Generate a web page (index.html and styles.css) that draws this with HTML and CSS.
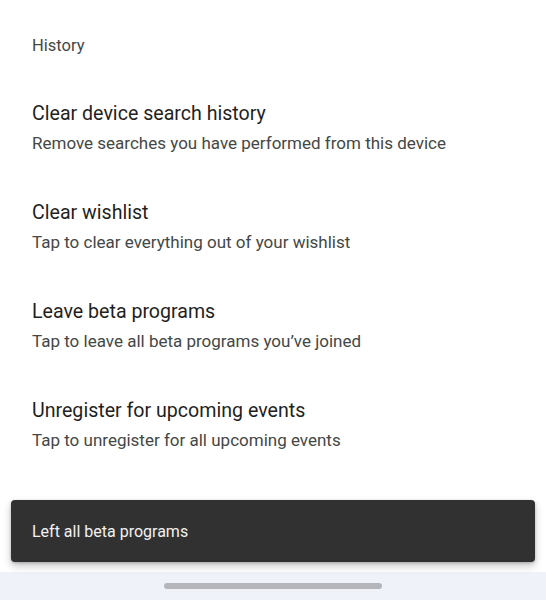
FILE: index.html
```html
<!DOCTYPE html>
<html lang="en">
<head>
<meta charset="utf-8">
<title>History settings</title>
<link rel="stylesheet" href="styles.css">
</head>
<body>
<main class="screen">
  <h2 class="section-header">History</h2>
  <ul class="pref-list">
    <li class="pref">
      <span class="pref-title">Clear device search history</span>
      <span class="pref-summary">Remove searches you have performed from this device</span>
    </li>
    <li class="pref">
      <span class="pref-title">Clear wishlist</span>
      <span class="pref-summary">Tap to clear everything out of your wishlist</span>
    </li>
    <li class="pref">
      <span class="pref-title">Leave beta programs</span>
      <span class="pref-summary">Tap to leave all beta programs you’ve joined</span>
    </li>
    <li class="pref">
      <span class="pref-title">Unregister for upcoming events</span>
      <span class="pref-summary">Tap to unregister for all upcoming events</span>
    </li>
  </ul>
</main>
<div class="snackbar" role="status">Left all beta programs</div>
<div class="nav-bar"><span class="nav-handle"></span></div>
</body>
</html>
```

FILE: styles.css
```css
* { box-sizing: border-box; }
html, body {
  margin: 0;
  padding: 0;
  background: #ffffff;
  font-family: Roboto, "Noto Sans", "Liberation Sans", sans-serif;
}
body {
  width: 546px;
  height: 600px;
  position: relative;
  overflow: hidden;
}
.screen {
  display: flex;
  flex-direction: column;
}
.section-header {
  margin: 0;
  padding: 34px 32px 0;
  font-size: 16.5px;
  line-height: 24px;
  font-weight: 400;
  color: #444746;
}
.pref-list {
  list-style: none;
  margin: 42px 0 0;
  padding: 0;
  display: flex;
  flex-direction: column;
  gap: 44px;
}
.pref {
  display: flex;
  flex-direction: column;
  gap: 3px;
  padding: 0 32px;
}
.pref-title {
  font-size: 19.6px;
  line-height: 28px;
  color: #1f1f1f;
}
.pref-summary {
  font-size: 17px;
  line-height: 24px;
  color: #444746;
}
.snackbar {
  position: absolute;
  left: 11px;
  top: 500px;
  width: 524px;
  height: 62px;
  background: #313131;
  border-radius: 4px;
  box-shadow: 0 4px 8px rgba(0,0,0,0.22), 0 1px 3px rgba(0,0,0,0.2);
  display: flex;
  align-items: center;
  padding-left: 21px;
  color: #f1f1f1;
  font-size: 16px;
  z-index: 2;
}
.nav-bar {
  position: absolute;
  left: 0;
  right: 0;
  bottom: 0;
  height: 28px;
  background: #eff2f8;
  display: flex;
  justify-content: center;
  padding-top: 11px;
}
.nav-handle {
  width: 218px;
  height: 6px;
  border-radius: 3px;
  background: #b4b6bc;
}
```
